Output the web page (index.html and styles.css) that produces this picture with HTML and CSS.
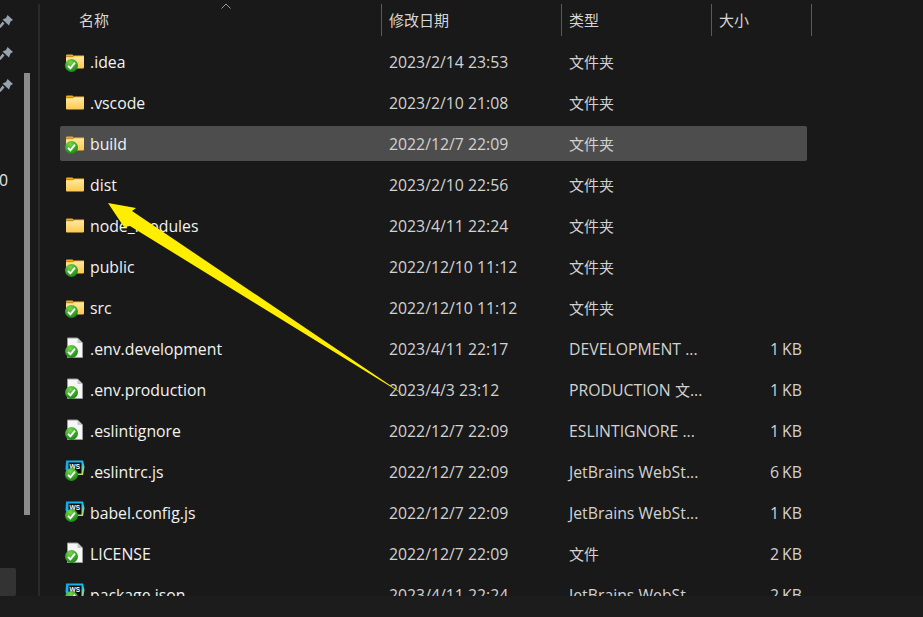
FILE: index.html
```html
<!DOCTYPE html>
<html lang="zh-CN">
<head>
    <meta charset="UTF-8">
    <meta name="viewport" content="width=device-width, initial-scale=1.0">
    <title>文件资源管理器</title>
    <link rel="stylesheet" href="styles.css">
</head>
<body>
    <svg class="defs" width="0" height="0">
        <defs>
            <linearGradient id="folder-fill" x1="0" y1="0" x2="0" y2="1">
                <stop offset="0" stop-color="#ffe9a3"/>
                <stop offset="1" stop-color="#fdc94f"/>
            </linearGradient>
            <linearGradient id="ws-fill" x1="0" y1="0" x2="1" y2="1">
                <stop offset="0" stop-color="#0fa5e8"/>
                <stop offset="0.55" stop-color="#17c3ee"/>
                <stop offset="1" stop-color="#f5e33c"/>
            </linearGradient>
            <radialGradient id="check-fill" cx="0.4" cy="0.25" r="0.8">
                <stop offset="0" stop-color="#74d64c"/>
                <stop offset="1" stop-color="#12850f"/>
            </radialGradient>
            <symbol id="check" viewBox="0 0 12 12">
                <circle cx="6" cy="6" r="6" fill="url(#check-fill)"/>
                <path d="M2.8 6.3 L5 8.6 L9.200 3.400" fill="none" stroke="#fff" stroke-width="1.7"/>
            </symbol>
            <symbol id="folder" viewBox="0 0 20 24">
                <path d="M1 5.5 Q1 4.5 2 4.5 H7.5 L9.5 6.5 H1 Z" fill="#f2ab1c"/>
                <path d="M1 7 H8 L9.5 6 H19 V17.6 Q19 18.5 18 18.5 H2 Q1 18.5 1 17.6 Z" fill="url(#folder-fill)"/>
                <path d="M1 7 H8 L9.5 6 H19" fill="none" stroke="#f7bb33" stroke-width="1"/>
            </symbol>
            <symbol id="file" viewBox="0 0 20 24">
                <path d="M2.5 1 H12.5 L17.5 6 V20.5 H2.5 Z" fill="#f7f7f7" stroke="#9a9a9a" stroke-width="1"/>
                <path d="M12.5 1 V6 H17.5 Z" fill="#c9c9c9"/>
            </symbol>
            <symbol id="ws" viewBox="0 0 20 24">
                <path d="M1 0.500 H18 L19.500 7 L18 15 H3 L0.500 9 Z" fill="url(#ws-fill)"/>
                <rect x="3.500" y="2.500" width="13" height="11" fill="#0b0b0b"/>
                <text x="4.500" y="9" textLength="10.500" lengthAdjust="spacingAndGlyphs" class="ws-text">WS</text>
            </symbol>
            <symbol id="pin" viewBox="0 0 14 14">
                <path d="M8.500 0 L14 5 L11.500 6.500 L10 10.500 L3.500 4.500 L7 3 Z M5.500 8.500 L1.500 13 L0 11.500 L3.500 6.500 Z" fill="#98a2ad"/>
            </symbol>
        </defs>
    </svg>

    <div class="window">
        <aside class="sidebar">
            <div class="quick">
                <svg class="pin"><use href="#pin"/></svg>
                <svg class="pin"><use href="#pin"/></svg>
                <svg class="pin"><use href="#pin"/></svg>
                <span class="cut-label">0</span>
                <div class="quick-active"></div>
            </div>
            <div class="side-track"><div class="side-thumb"></div></div>
        </aside>

        <main class="list">
            <div class="head">
                <div class="head-cell head-name">名称<svg class="sort" viewBox="0 0 10 6"><path d="M0.500 5.500 L5 1 L9.500 5.500" fill="none" stroke="#9a9a9a" stroke-width="1"/></svg></div>
                <div class="head-cell">修改日期</div>
                <div class="head-cell">类型</div>
                <div class="head-cell">大小</div>
            </div>

            <div class="rows">
                <div class="row">
                    <div class="name"><span class="icon"><svg><use href="#folder"/></svg><svg class="badge badge-folder"><use href="#check"/></svg></span>.idea</div>
                    <div class="cell">2023/2/14 23:53</div><div class="cell zh">文件夹</div><div class="cell size"></div>
                </div>
                <div class="row">
                    <div class="name"><span class="icon"><svg><use href="#folder"/></svg></span>.vscode</div>
                    <div class="cell">2023/2/10 21:08</div><div class="cell zh">文件夹</div><div class="cell size"></div>
                </div>
                <div class="row selected">
                    <div class="name"><span class="icon"><svg><use href="#folder"/></svg><svg class="badge badge-folder"><use href="#check"/></svg></span>build</div>
                    <div class="cell">2022/12/7 22:09</div><div class="cell zh">文件夹</div><div class="cell size"></div>
                </div>
                <div class="row">
                    <div class="name"><span class="icon"><svg><use href="#folder"/></svg></span>dist</div>
                    <div class="cell">2023/2/10 22:56</div><div class="cell zh">文件夹</div><div class="cell size"></div>
                </div>
                <div class="row">
                    <div class="name"><span class="icon"><svg><use href="#folder"/></svg></span>node_modules</div>
                    <div class="cell">2023/4/11 22:24</div><div class="cell zh">文件夹</div><div class="cell size"></div>
                </div>
                <div class="row">
                    <div class="name"><span class="icon"><svg><use href="#folder"/></svg><svg class="badge badge-folder"><use href="#check"/></svg></span>public</div>
                    <div class="cell">2022/12/10 11:12</div><div class="cell zh">文件夹</div><div class="cell size"></div>
                </div>
                <div class="row">
                    <div class="name"><span class="icon"><svg><use href="#folder"/></svg><svg class="badge badge-folder"><use href="#check"/></svg></span>src</div>
                    <div class="cell">2022/12/10 11:12</div><div class="cell zh">文件夹</div><div class="cell size"></div>
                </div>
                <div class="row">
                    <div class="name"><span class="icon"><svg><use href="#file"/></svg><svg class="badge"><use href="#check"/></svg></span>.env.development</div>
                    <div class="cell">2023/4/11 22:17</div><div class="cell">DEVELOPMENT ...</div><div class="cell size">1 KB</div>
                </div>
                <div class="row">
                    <div class="name"><span class="icon"><svg><use href="#file"/></svg><svg class="badge"><use href="#check"/></svg></span>.env.production</div>
                    <div class="cell">2023/4/3 23:12</div><div class="cell">PRODUCTION <span class="zh">文</span>...</div><div class="cell size">1 KB</div>
                </div>
                <div class="row">
                    <div class="name"><span class="icon"><svg><use href="#file"/></svg><svg class="badge"><use href="#check"/></svg></span>.eslintignore</div>
                    <div class="cell">2022/12/7 22:09</div><div class="cell">ESLINTIGNORE ...</div><div class="cell size">1 KB</div>
                </div>
                <div class="row">
                    <div class="name"><span class="icon"><svg><use href="#ws"/></svg><svg class="badge"><use href="#check"/></svg></span>.eslintrc.js</div>
                    <div class="cell">2022/12/7 22:09</div><div class="cell">JetBrains WebSt...</div><div class="cell size">6 KB</div>
                </div>
                <div class="row">
                    <div class="name"><span class="icon"><svg><use href="#ws"/></svg><svg class="badge"><use href="#check"/></svg></span>babel.config.js</div>
                    <div class="cell">2022/12/7 22:09</div><div class="cell">JetBrains WebSt...</div><div class="cell size">1 KB</div>
                </div>
                <div class="row">
                    <div class="name"><span class="icon"><svg><use href="#file"/></svg><svg class="badge"><use href="#check"/></svg></span>LICENSE</div>
                    <div class="cell">2022/12/7 22:09</div><div class="cell zh">文件</div><div class="cell size">2 KB</div>
                </div>
                <div class="row">
                    <div class="name"><span class="icon"><svg><use href="#ws"/></svg><svg class="badge"><use href="#check"/></svg></span>package.json</div>
                    <div class="cell">2023/4/11 22:24</div><div class="cell">JetBrains WebSt...</div><div class="cell size">2 KB</div>
                </div>
            </div>
        </main>
    </div>
    <div class="statusbar"></div>

    <!-- yellow annotation arrow drawn over the list -->
    <svg class="arrow" viewBox="0 0 923 617">
        <path d="M108 203 L136 208 L132 211 L409 398 L130 226 L124 227 Z" fill="#ffee00"/>
    </svg>
</body>
</html>
```

FILE: styles.css
```css
html, body {
    margin: 0;
    height: 100%;
}
body {
    width: 923px;
    height: 617px;
    overflow: hidden;
    background: #191919;
    color: #f2f2f2;
    font-family: "Open Sans", "Noto Sans CJK SC", sans-serif;
    font-size: 15.8px;
    display: flex;
    flex-direction: column;
}
.defs {
    position: absolute;
}
.ws-text {
    font-family: "Liberation Sans", sans-serif;
    font-size: 7.5px;
    font-weight: bold;
    fill: #fff;
}
.window {
    height: 596px;
    display: flex;
    overflow: hidden;
}
.statusbar {
    flex: 1;
    background: #1c1c1c;
}

/* left navigation pane */
.sidebar {
    width: 38px;
    margin-top: 4px;
    border-right: 2px solid #2a2a2a;
    display: flex;
}
.quick {
    width: 24px;
    display: flex;
    flex-direction: column;
    overflow: hidden;
}
.pin {
    width: 14px;
    height: 14px;
    margin-left: -1px;
    margin-top: 18px;
    flex-shrink: 0;
}
.pin:first-child {
    margin-top: 11px;
}
.cut-label {
    margin-top: 76px;
    margin-left: -1px;
    color: #e6e6e6;
}
.quick-active {
    width: 16px;
    height: 28px;
    margin-top: auto;
    background: #333;
    border-radius: 0 2px 2px 0;
}
.side-track {
    width: 6px;
    padding-top: 69px;
}
.side-thumb {
    height: 442px;
    background: #8c8c8c;
}

/* details list */
.list {
    flex: 1;
    padding-left: 20px;
    overflow: hidden;
}
.head {
    display: grid;
    grid-template-columns: 322px 180px 150px 100px;
    height: 32px;
    margin-top: 4px;
    margin-bottom: 8px;
}
.head-cell {
    position: relative;
    box-sizing: border-box;
    padding-left: 7px;
    border-right: 1px solid #5a5a5a;
    font-size: 15px;
    line-height: 32px;
    color: #d6d6d6;
}
.head-name {
    padding-left: 19px;
}
.sort {
    position: absolute;
    left: 161px;
    top: -1px;
    width: 10px;
    height: 6px;
}
.rows {
    display: flex;
    flex-direction: column;
    gap: 6px;
}
.row {
    display: grid;
    grid-template-columns: 329px 180px 150px 88px;
    width: 747px;
    height: 35px;
    line-height: 37px;
    flex-shrink: 0;
    border-radius: 2px;
    white-space: nowrap;
}
.row.selected {
    background: #4d4d4d;
}
.name {
    box-sizing: border-box;
    display: flex;
    align-items: center;
    height: 35px;
    padding-top: 1px;
    padding-left: 5px;
    line-height: 20px;
}
.icon {
    position: relative;
    width: 20px;
    height: 24px;
    margin-right: 5px;
    margin-bottom: 1px;
    flex-shrink: 0;
}
.icon svg {
    display: block;
    width: 20px;
    height: 24px;
}
.icon .badge {
    position: absolute;
    left: 0;
    top: 8px;
    width: 13px;
    height: 13px;
}
.icon .badge-folder {
    top: 9px;
}
.cell {
    color: #d2d2d2;
}
.zh {
    font-size: 15px;
}
.size {
    text-align: right;
    padding-right: 5px;
    word-spacing: -1px;
}
.arrow {
    position: absolute;
    left: 0;
    top: 0;
    width: 923px;
    height: 617px;
    pointer-events: none;
}
```
